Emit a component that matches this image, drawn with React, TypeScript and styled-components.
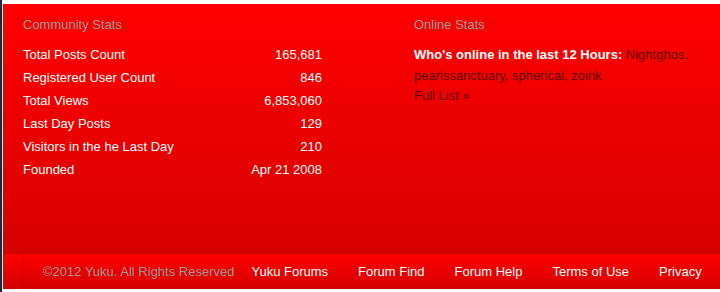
import React from 'react';
import styled, { createGlobalStyle } from 'styled-components';

const GlobalStyle = createGlobalStyle`
    html, body {
        margin: 0;
        padding: 0;
        background: #ffffff;
    }
    body {
        font-family: 'Liberation Sans', Arial, sans-serif;
        font-size: 13px;
    }
`;

interface Stat {
    label: string;
    value: string;
}

const stats: Stat[] = [
    { label: 'Total Posts Count', value: '165,681' },
    { label: 'Registered User Count', value: '846' },
    { label: 'Total Views', value: '6,853,060' },
    { label: 'Last Day Posts', value: '129' },
    { label: 'Visitors in the he Last Day', value: '210' },
    { label: 'Founded', value: 'Apr 21 2008' },
];

const footerLinks = ['Yuku Forums', 'Forum Find', 'Forum Help', 'Terms of Use', 'Privacy'];

export default function App() {
    return (
        <>
            <GlobalStyle />
            <Page>
                <Content>
                    <StatsPanel>
                        <StatsColumn>
                            <SectionTitle>Community Stats</SectionTitle>
                            <StatList>
                                {stats.map((s) => (
                                    <StatRow key={s.label}>
                                        <span>{s.label}</span>
                                        <span>{s.value}</span>
                                    </StatRow>
                                ))}
                            </StatList>
                        </StatsColumn>
                        <OnlineColumn>
                            <SectionTitle>Online Stats</SectionTitle>
                            <OnlineText>
                                <strong>Who's online in the last 12 Hours:</strong> Nightghos, pearlssanctuary, spherical,
                                zoink
                                <br />
                                <FullList href="#">Full List »</FullList>
                            </OnlineText>
                        </OnlineColumn>
                    </StatsPanel>
                    <Footer>
                        <FooterInner>
                            <Copyright>©2012 Yuku. All Rights Reserved</Copyright>
                            {footerLinks.map((l) => (
                                <FooterLink key={l} href="#">
                                    {l}
                                </FooterLink>
                            ))}
                        </FooterInner>
                    </Footer>
                </Content>
            </Page>
        </>
    );
}

const Page = styled.div`
    display: flex;
    height: 292px;
    border-left: 2px solid #1c2a3c;
    background: #ffffff;
`;

const Content = styled.div`
    flex: 1;
    display: flex;
    flex-direction: column;
    margin-left: 1px;
    padding-top: 4px;
`;

const StatsPanel = styled.div`
    display: flex;
    height: 250px;
    background: linear-gradient(to bottom, #ff0000 0%, #d70000 100%);
    box-sizing: border-box;
    padding: 13px 0 0 20px;
`;

const StatsColumn = styled.div`
    width: 299px;
`;

const OnlineColumn = styled.div`
    margin-left: 92px;
    flex: 1;
    padding-right: 14px;
`;

const SectionTitle = styled.div`
    color: #9a9a9a;
    font-size: 13px;
    line-height: 15px;
    margin-bottom: 11px;
`;

const StatList = styled.div`
    display: flex;
    flex-direction: column;
`;

const StatRow = styled.div`
    display: flex;
    justify-content: space-between;
    color: #ffffff;
    line-height: 23px;
    height: 23px;
`;

const OnlineText = styled.div`
    color: #5c0000;
    line-height: 20.5px;
    padding-top: 2px;

    strong {
        color: #ffffff;
        font-weight: bold;
    }
`;

const FullList = styled.a`
    color: #5c0000;
    text-decoration: none;
`;

const Footer = styled.div`
    height: 35px;
    background: linear-gradient(to bottom, #ff0000 0%, #d40000 100%);
    padding-left: 20px;
    display: flex;
`;

const FooterInner = styled.div`
    flex: 1;
    display: flex;
    align-items: center;
    border-left: 1px solid rgba(120, 0, 0, 0.25);
`;

const Copyright = styled.span`
    color: #9a9a9a;
    padding: 0 2px 0 19px;
`;

const FooterLink = styled.a`
    color: #ffffff;
    text-decoration: none;
    padding: 0 15px;
`;
